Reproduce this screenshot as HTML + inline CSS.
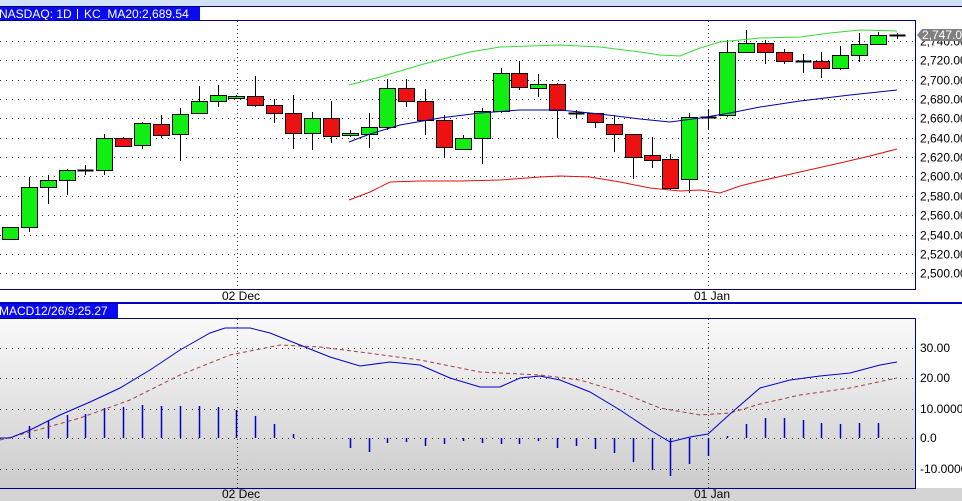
<!DOCTYPE html>
<html><head><meta charset="utf-8"><style>
html,body{margin:0;padding:0;width:962px;height:501px;overflow:hidden;background:#fff;font-family:"Liberation Sans",sans-serif}
svg{display:block}
text{font-family:"Liberation Sans",sans-serif;font-size:12px}
</style></head><body>
<svg id="s" width="962" height="501" xmlns="http://www.w3.org/2000/svg">
<defs><linearGradient id="g" x1="0" y1="0" x2="0" y2="1"><stop offset="0" stop-color="#fafafa"/><stop offset="1" stop-color="#cccccc"/></linearGradient></defs>
<rect x="0" y="0" width="962" height="6" fill="#d0e0f8"/>
<line x1="0" y1="6.5" x2="962" y2="6.5" stroke="#000080"/>
<rect x="0" y="7" width="200" height="13" fill="#0a0af0"/>
<line x1="77.5" y1="9" x2="77.5" y2="19" stroke="#fff"/>
<text x="-1" y="18" fill="#fff">NASDAQ: 1D</text>
<text x="84" y="18" fill="#fff">KC_MA20:2,689.54</text>
<rect x="0" y="20" width="962" height="268" fill="#fff"/>
<rect x="0" y="318" width="916" height="170" fill="url(#g)"/>
<rect x="0" y="488" width="962" height="13" fill="#d4d4d4"/>
<g id="grid"></g>
<g id="c"></g>
<line x1="0" y1="20.5" x2="915.5" y2="20.5" stroke="#000080"/>
<line x1="915.5" y1="20" x2="915.5" y2="289" stroke="#000080"/>
<line x1="0" y1="289.5" x2="916" y2="289.5" stroke="#000080"/>
<line x1="0" y1="303" x2="962" y2="303" stroke="#0000c0" stroke-width="2"/>
<rect x="0" y="304" width="118" height="14" fill="#0a0af0"/>
<text x="-1" y="315" fill="#fff">MACD12/26/9:25.27</text>
<line x1="0" y1="318.5" x2="915.5" y2="318.5" stroke="#000080"/>
<line x1="915.5" y1="318" x2="915.5" y2="488" stroke="#000080"/>
<line x1="0" y1="488.5" x2="916" y2="488.5" stroke="#000080"/>
<text x="222" y="300">02 Dec</text><text x="694" y="300">01 Jan</text>
<text x="222" y="498">02 Dec</text><text x="694" y="498">01 Jan</text>
<polygon points="917,35 922,29 962,29 962,41 922,41" fill="#808080"/>
<text x="922" y="39" fill="#fff">2,747.00</text>
</svg>
<script>
var s=document.getElementById('c'),gr=document.getElementById('grid'),NS='http://www.w3.org/2000/svg';
function el(p,t,a){var e=document.createElementNS(NS,t);for(var k in a)e.setAttribute(k,a[k]);p.appendChild(e);return e;}
var labs=[2740,2720,2700,2680,2660,2640,2620,2600,2580,2560,2540,2520,2500];
labs.forEach(function(p){var y=Math.round(41+(2740-p)*0.9675)+0.5;
 el(gr,'line',{x1:0,y1:y,x2:915,y2:y,stroke:'#333','stroke-dasharray':'1,5'});
 var t=el(gr,'text',{x:920,y:y+4});t.textContent=p.toLocaleString('en-US')+'.00';
});
[[348,'30.00'],[378,'20.00'],[409,'10.00000'],[438,'0.0'],[469,'-10.0000']].forEach(function(a){
 el(gr,'line',{x1:0,y1:a[0]+.5,x2:915,y2:a[0]+.5,stroke:'#333','stroke-dasharray':'1,5'});
 var t=el(gr,'text',{x:920,y:a[0]+4});t.textContent=a[1];});
[237.5,708.5].forEach(function(x){el(gr,'line',{x1:x,y1:21,x2:x,y2:289,stroke:'#333','stroke-dasharray':'1,3'});el(gr,'line',{x1:x,y1:319,x2:x,y2:488,stroke:'#333','stroke-dasharray':'1,3'});});
var C=[[227,239,227,239,'g'],[177,232,187,227,'g'],[175,204,180,187,'g'],[169,195,170,180,'g'],[165,175,170,170,'d'],[134,175,138,170,'g'],[137,146,138,146,'r'],[122,149,123,145,'g'],[115,138,124,135,'r'],[108,161,114,134,'g'],[86,113,101,113,'g'],[85,107,95,101,'g'],[95,99,96,98,'g'],[76,107,96,105,'r'],[99,123,105,113,'r'],[95,149,113,133,'r'],[112,150,118,133,'g'],[101,143,118,136,'r'],[130,137,133,135,'g'],[113,148,127,134,'g'],[79,130,88,127,'g'],[79,107,88,101,'r'],[89,135,101,120,'r'],[115,158,120,147,'r'],[135,150,138,149,'g'],[108,164,111,138,'g'],[68,113,73,111,'g'],[61,90,73,87,'r'],[74,97,84,88,'g'],[83,138,84,110,'r'],[110,118,113,113,'d'],[113,128,113,122,'r'],[115,152,124,134,'r'],[134,179,134,157,'r'],[137,168,155,160,'r'],[154,190,159,188,'r'],[113,193,117,179,'g'],[110,130,117,117,'d'],[40,117,52,115,'g'],[30,52,43,52,'g'],[40,64,43,52,'r'],[49,64,52,61,'r'],[54,73,61,61,'d'],[52,78,61,68,'r'],[46,70,55,68,'g'],[33,62,44,55,'g'],[32,44,35,44,'g'],[33,39,35,35,'d']];
C.forEach(function(c,i){var x=Math.round(10+i*18.87)+.5;
 el(s,'line',{x1:x,y1:c[0],x2:x,y2:c[1],stroke:'#000'});
 if(c[4]=='d'){el(s,'line',{x1:x-8,y1:c[2]+.5,x2:x+8,y2:c[2]+.5,stroke:'#000','stroke-width':2});}
 else el(s,'rect',{x:x-8,y:c[2]+.5,width:16,height:Math.max(c[3]-c[2],2),fill:c[4]=='g'?'#11ee11':'#ee1111',stroke:'#000'});
});
function pl(pts,col,dash,w){var a={points:pts,fill:'none',stroke:col,'stroke-width':w||1};if(dash)a['stroke-dasharray']=dash;el(s,'polyline',a);}
pl('349,85 380,77 420,65 470,52 500,47 560,45 600,47 640,52 660,55 680,56 700,48 720,42 760,38 800,37 830,33 860,30 897,31','#33dd33');
pl('349,142 370,134 400,125 440,118 480,113 520,110 560,110 580,112 600,114 640,119 670,122 700,118 730,113 760,107 800,101 850,95 897,90','#0000a0');
pl('349,200 370,192 390,182 420,181 460,181 500,180 540,177 560,176 590,177 620,182 650,188 680,191 700,190 720,193 740,186 760,181 800,172 840,163 870,156 897,149','#dd1111');
var H=[438,426,421,415,414,408,407,405,406,406,406,407,410,416,424,434,438,438,448,452,443,442,446,444,441,443,444,444,441,448,446,449,453,462,470,476,464,456,436,424,418,418,420,423,424,423,423];
H.forEach(function(h,i){var x=Math.round(10+i*18.87)+.5;if(i==0)return;el(s,'line',{x1:x,y1:438,x2:x,y2:h,stroke:'#0000c0','stroke-width':1.5});});
pl('0,440 30,432 80,418 130,400 180,375 230,355 280,345 320,347 360,352 420,360 480,372 540,375 580,380 620,392 660,408 700,415 730,413 760,404 800,395 850,388 897,378','#a04040','4,3');
pl('0,438 10,438 30,430 60,415 90,402 120,388 150,370 180,350 210,333 225,328 250,328 270,333 300,345 330,357 360,366 390,362 420,365 450,378 480,387 500,387 520,378 540,376 560,380 590,392 620,410 650,430 670,442 690,437 708,434 730,414 760,388 790,380 820,376 850,373 880,365 897,362','#0000d0');
</script>
</body></html>
